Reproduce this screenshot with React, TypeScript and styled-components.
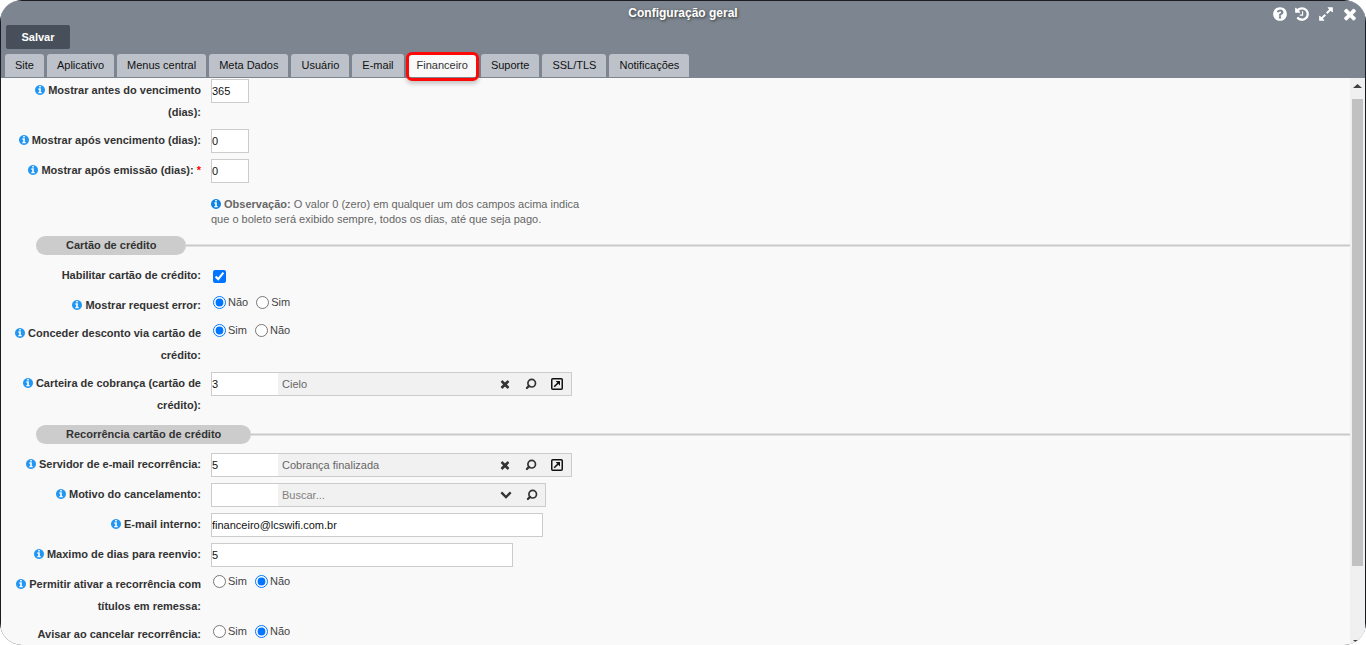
import React from "react";
import styled, { createGlobalStyle, css } from "styled-components";

const GlobalStyle = createGlobalStyle`
  *, *::before, *::after { box-sizing: border-box; }
  body {
    margin: 0;
    background: #fff;
    color: #333;
    font: 11px/22px "Liberation Sans", Arial, sans-serif;
  }
  button, input { font: inherit; color: inherit; }
`;

const Frame = styled.div`
  display: flex;
  height: 100vh;
  padding: 1px 1px 0;
  overflow: hidden;
  border-radius: 22px;
  background: #1b1c22;
`;

const Window = styled.main`
  display: flex;
  flex: 1;
  flex-direction: column;
  min-width: 0;
  background: #f9f9f9;
`;

const Header = styled.header`
  flex: none;
  background: #7d8690;
`;

const TitleBar = styled.div`
  display: grid;
  grid-template-columns: 1fr auto 1fr;
  align-items: center;
  height: 24px;
  padding: 0 8px;
`;

const Title = styled.h1`
  grid-column: 2;
  margin: 0;
  color: #fff;
  font-size: 12px;
  line-height: 24px;
  text-shadow: 1px 1px 3px #333;
`;

const Controls = styled.div<{ $gap: number }>`
  display: flex;
  align-items: center;
  justify-content: flex-end;
  gap: ${(p) => p.$gap}px;
`;

const IconButton = styled.button<{ $size: number; $width: number }>`
  display: flex;
  flex: none;
  align-items: center;
  justify-content: center;
  width: ${(p) => p.$width}px;
  padding: 0;
  border: 0;
  background: none;
  cursor: pointer;
  svg {
    flex: none;
    width: ${(p) => p.$size}px;
    height: ${(p) => p.$size}px;
  }
`;

const HeaderButton = styled(IconButton)`
  height: 16px;
  margin-top: 2px;
  color: #fff;
`;

const Actions = styled.div`
  padding: 0 5px;
`;

const SaveButton = styled.button`
  display: block;
  width: 64px;
  height: 24px;
  padding: 0;
  border: 0;
  border-radius: 2px;
  background: #464f5a;
  color: #fff;
  font-weight: bold;
  cursor: pointer;
`;

const Tabs = styled.nav`
  display: flex;
  gap: 3px;
  padding: 5px 4px 1px;
`;

const Tab = styled.a<{ $active: boolean }>`
  position: relative;
  height: 23px;
  padding: 0 10px;
  border-radius: 3px 3px 0 0;
  background: #bdc2ca;
  color: #111;
  line-height: 23px;
  text-decoration: none;
  white-space: nowrap;
  ${(p) =>
    p.$active &&
    css`
      background: #f9f9f9;
      color: #333;
      &::after {
        content: "";
        position: absolute;
        inset: -2px -1px -4px;
        border: 3px solid #ff0808;
        border-radius: 6px;
        box-shadow: 0 3px 4px rgba(0, 0, 0, 0.2);
      }
    `}
`;

const Body = styled.div`
  display: flex;
  flex: 1;
  min-height: 0;
`;

const Form = styled.form`
  flex: 1;
  min-width: 0;
  padding: 1px 0 0 10px;
  overflow-y: auto;
  scrollbar-width: none;
`;

const Row = styled.div`
  display: flex;
  gap: 10px;
  align-items: flex-start;
  margin-bottom: 6px;
`;

const labelStyle = css`
  flex: none;
  width: 190px;
  font-weight: bold;
  text-align: right;
`;

const Label = styled.label`
  ${labelStyle}
`;

const GroupLabel = styled.span`
  ${labelStyle}
`;

const InfoMark = styled.svg<{ $strong?: boolean }>`
  width: 10px;
  height: 10px;
  margin-right: 3px;
  fill: ${(p) => (p.$strong ? "#0d83e6" : "#2196f3")};
  vertical-align: -1px;
`;

const Required = styled.span`
  color: #f00;
`;

const TextInput = styled.input<{ $width: number }>`
  width: ${(p) => p.$width}px;
  height: 24px;
  padding: 0;
  border: 1px solid #ccc;
  background: #fff;
  color: #111;
`;

const CheckCell = styled.div`
  display: flex;
  align-items: center;
  height: 24px;
  padding-left: 2px;
`;

const Tick = styled.input`
  width: 13px;
  height: 13px;
  margin: 0;
  accent-color: #0075ff;
`;

const Options = styled.div`
  display: flex;
  gap: 8px;
  padding-left: 2px;
`;

const Option = styled.label`
  display: flex;
  gap: 2px;
  align-items: center;
  color: #444;
  line-height: 16px;
`;

const Note = styled.p`
  width: 380px;
  margin: 14px 0 9px 200px;
  color: #666;
  line-height: 15px;
`;

const Section = styled.h2`
  display: flex;
  align-items: center;
  margin: 9px 0 9px 25px;
  font-size: 11px;
  line-height: 19px;
  &::after {
    content: "";
    flex: 1;
    height: 3px;
    border: solid #e2e2e2;
    border-width: 1px 0;
    background: #c8c8c8;
  }
`;

const Pill = styled.span`
  padding: 0 30px;
  border-radius: 10px;
  background: #ccc;
`;

const LookupBox = styled.div<{ $width: number; $inset: number }>`
  display: flex;
  width: ${(p) => p.$width}px;
  height: 24px;
  padding-right: ${(p) => p.$inset}px;
  border: 1px solid #ccc;
  background: #f1f1f1;
`;

const CodeInput = styled.input`
  width: 66px;
  padding: 0;
  border: 0;
  background: #fff;
  color: #111;
`;

const NameInput = styled.input`
  flex: 1;
  min-width: 0;
  padding: 0 4px;
  border: 0;
  background: none;
  color: #666;
  &::placeholder { color: #808080; }
`;

const Scrollbar = styled.div`
  display: flex;
  flex: none;
  flex-direction: column;
  width: 15px;
  padding: 5px 2px 0;
  background: #f0f0f0;
`;

const Arrow = styled.svg`
  display: block;
  flex: none;
  width: 11px;
  height: 6px;
  fill: #404040;
`;

const Track = styled.div`
  flex: 1;
  margin: 10px 0 9px;
`;

const Thumb = styled.div`
  height: 88%;
  background: #c1c1c1;
`;

const InfoIcon = ({ strong }: { strong?: boolean }) => (
  <InfoMark viewBox="128 128 1536 1536" $strong={strong} aria-hidden="true">
    <path d="M1152 1376v-160q0-14-9-23t-23-9h-96v-512q0-14-9-23t-23-9h-320q-14 0-23 9t-9 23v160q0 14 9 23t23 9h96v320h-96q-14 0-23 9t-9 23v160q0 14 9 23t23 9h448q14 0 23-9t9-23zm-128-896v-160q0-14-9-23t-23-9h-192q-14 0-23 9t-9 23v160q0 14 9 23t23 9h192q14 0 23-9t9-23zm640 416q0 209-103 385.5t-279.5 279.5-385.5 103-385.5-103-279.5-279.5-103-385.5 103-385.5 279.5-279.5 385.5-103 385.5 103 279.5 279.5 103 385.5z" />
  </InfoMark>
);

const HelpIcon = () => (
  <svg viewBox="0 0 1792 1792" fill="currentColor">
    <path d="M1024 1376v-192q0-14-9-23t-23-9h-192q-14 0-23 9t-9 23v192q0 14 9 23t23 9h192q14 0 23-9t9-23zm256-672q0-88-55.5-163t-138.5-116-170-41q-243 0-371 213-15 24 8 42l132 100q7 6 19 6 16 0 25-12 53-68 86-92 34-24 86-24 48 0 85.5 26t37.5 59q0 38-20 61t-68 45q-63 28-115.5 86.5t-52.5 125.5v36q0 14 9 23t23 9h192q14 0 23-9t9-23q0-19 21.5-49.5t54.5-49.5q32-18 49-28.5t46-35 44.5-48 28-60.5 12.5-81zm384 192q0 209-103 385.5t-279.5 279.5-385.5 103-385.5-103-279.5-279.5-103-385.5 103-385.5 279.5-279.5 385.5-103 385.5 103 279.5 279.5 103 385.5z" />
  </svg>
);

const HistoryIcon = () => (
  <svg viewBox="0 0 1792 1792" fill="currentColor">
    <path d="M1664 896q0 156-61 298t-164 245-245 164-298 61q-172 0-327-72.5t-264-204.5q-7-10-6.5-22.5t8.5-20.5l137-138q10-9 25-9 16 2 23 12 73 95 179 147t225 52q104 0 198.5-40.5t163.5-109.5 109.5-163.5 40.5-198.5-40.5-198.5-109.5-163.5-163.5-109.5-198.5-40.5q-98 0-188 35.5t-160 101.5l137 138q31 30 14 69-17 40-59 40h-448q-26 0-45-19t-19-45v-448q0-42 40-59 39-17 69 14l130 129q107-101 244.5-156.5t284.5-55.5q156 0 298 61t245 164 164 245 61 298zm-640-288v448q0 14-9 23t-23 9h-320q-14 0-23-9t-9-23v-64q0-14 9-23t23-9h224v-352q0-14 9-23t23-9h64q14 0 23 9t9 23z" />
  </svg>
);

const ExpandIcon = () => (
  <svg viewBox="0 0 1792 1792" fill="currentColor">
    <path d="M883 1056q0 13-10 23l-332 332 144 144q19 19 19 45t-19 45-45 19h-448q-26 0-45-19t-19-45v-448q0-26 19-45t45-19 45 19l144 144 332-332q10-10 23-10t23 10l114 114q10 10 10 23zm781-864v448q0 26-19 45t-45 19-45-19l-144-144-332 332q-10 10-23 10t-23-10l-114-114q-10-10-10-23t10-23l332-332-144-144q-19-19-19-45t19-45 45-19h448q26 0 45 19t19 45z" />
  </svg>
);

const CrossIcon = () => (
  <svg viewBox="192 192 1408 1408" fill="currentColor">
    <path d="M1490 1322q0 40-28 68l-136 136q-28 28-68 28t-68-28l-294-294-294 294q-28 28-68 28t-68-28l-136-136q-28-28-28-68t28-68l294-294-294-294q-28-28-28-68t28-68l136-136q28-28 68-28t68 28l294 294 294-294q28-28 68-28t68 28l136 136q28 28 28 68t-28 68l-294 294 294 294q28 28 28 68z" />
  </svg>
);

const ChevronIcon = () => (
  <svg viewBox="0 128 1792 1792" fill="currentColor">
    <path d="M1683 808l-742 741q-19 19-45 19t-45-19l-742-741q-19-19-19-45.500t19-45.500l166-165q19-19 45-19t45 19l531 531 531-531q19-19 45-19t45 19l166 165q19 19 19 45.500t-19 45.500z" />
  </svg>
);

const SearchIcon = () => (
  <svg viewBox="0 0 12 12" fill="none" stroke="currentColor">
    <circle cx="6.700" cy="5.200" r="3.800" strokeWidth="1.700" />
    <path d="M4 7.900 1.900 10" strokeWidth="2.200" strokeLinecap="round" />
  </svg>
);

const OpenIcon = () => (
  <svg viewBox="0 0 12 12" fill="none" stroke="#111">
    <rect x="0.750" y="0.750" width="10.500" height="10.500" rx="1" strokeWidth="1.500" />
    <path d="M3.200 8.800 7.500 4.500" strokeWidth="1.600" />
    <path d="M4.600 3h4.400v4.400z" fill="#111" stroke="none" />
  </svg>
);

type FieldProps = { label: string; info?: boolean; required?: boolean };

const LabelText = ({ label, info = true, required }: FieldProps) => (
  <>
    {info && <InfoIcon />}
    {label}
    {required && <Required> *</Required>}
  </>
);

const TextField = ({ id, value, width, ...rest }: FieldProps & { id: string; value: string; width: number }) => (
  <Row>
    <Label htmlFor={id}><LabelText {...rest} /></Label>
    <TextInput id={id} defaultValue={value} $width={width} />
  </Row>
);

const RadioField = ({ name, options, value, ...rest }: FieldProps & { name: string; options: string[]; value: string }) => (
  <Row role="radiogroup" aria-labelledby={`${name}-label`}>
    <GroupLabel id={`${name}-label`}><LabelText {...rest} /></GroupLabel>
    <Options>
      {options.map((option) => (
        <Option key={option}>
          <Tick type="radio" name={name} defaultChecked={option === value} />
          {option}
        </Option>
      ))}
    </Options>
  </Row>
);

const LookupField = ({ id, code, text, filled, ...rest }: FieldProps & { id: string; code: string; text: string; filled: boolean }) => (
  <Row>
    <Label htmlFor={id}><LabelText {...rest} /></Label>
    <LookupBox $width={filled ? 361 : 335} $inset={filled ? 1 : 0}>
      <CodeInput id={id} defaultValue={code} />
      <NameInput aria-label="Descrição" defaultValue={text} placeholder="Buscar..." />
      {filled ? (
        <IconButton type="button" aria-label="Limpar" $size={10} $width={26}><CrossIcon /></IconButton>
      ) : (
        <IconButton type="button" aria-label="Abrir lista" $size={12} $width={26}><ChevronIcon /></IconButton>
      )}
      <IconButton type="button" aria-label="Pesquisar" $size={12} $width={26}><SearchIcon /></IconButton>
      {filled && <IconButton type="button" aria-label="Abrir registro" $size={12} $width={26}><OpenIcon /></IconButton>}
    </LookupBox>
  </Row>
);

const tabs = ["Site", "Aplicativo", "Menus central", "Meta Dados", "Usuário", "E-mail", "Financeiro", "Suporte", "SSL/TLS", "Notificações"];

export default function App() {
  return (
    <Frame>
      <GlobalStyle />
      <Window>
        <Header>
          <TitleBar>
            <Title>Configuração geral</Title>
            <Controls $gap={10}>
              <Controls $gap={8}>
                <HeaderButton type="button" aria-label="Ajuda" $size={16} $width={14}><HelpIcon /></HeaderButton>
                <HeaderButton type="button" aria-label="Histórico" $size={16} $width={14}><HistoryIcon /></HeaderButton>
              </Controls>
              <HeaderButton type="button" aria-label="Expandir" $size={16} $width={14}><ExpandIcon /></HeaderButton>
              <HeaderButton type="button" aria-label="Fechar" $size={14} $width={14}><CrossIcon /></HeaderButton>
            </Controls>
          </TitleBar>
          <Actions>
            <SaveButton type="submit" form="config">Salvar</SaveButton>
          </Actions>
          <Tabs>
            {tabs.map((tab) => (
              <Tab key={tab} href="#" $active={tab === "Financeiro"}>{tab}</Tab>
            ))}
          </Tabs>
        </Header>
        <Body>
          <Form id="config">
            <TextField id="antes" label="Mostrar antes do vencimento (dias):" value="365" width={38} />
            <TextField id="apos" label="Mostrar após vencimento (dias):" value="0" width={38} />
            <TextField id="emissao" label="Mostrar após emissão (dias):" required value="0" width={38} />
            <Note>
              <InfoIcon strong />
              <b>Observação:</b> O valor 0 (zero) em qualquer um dos campos acima indica que o boleto será exibido
              sempre, todos os dias, até que seja pago.
            </Note>
            <Section><Pill>Cartão de crédito</Pill></Section>
            <Row>
              <Label htmlFor="habilitar">Habilitar cartão de crédito:</Label>
              <CheckCell><Tick id="habilitar" type="checkbox" defaultChecked /></CheckCell>
            </Row>
            <RadioField name="erro" label="Mostrar request error:" options={["Não", "Sim"]} value="Não" />
            <RadioField name="desconto" label="Conceder desconto via cartão de crédito:" options={["Sim", "Não"]} value="Sim" />
            <LookupField id="carteira" label="Carteira de cobrança (cartão de crédito):" code="3" text="Cielo" filled />
            <Section><Pill>Recorrência cartão de crédito</Pill></Section>
            <LookupField id="servidor" label="Servidor de e-mail recorrência:" code="5" text="Cobrança finalizada" filled />
            <LookupField id="motivo" label="Motivo do cancelamento:" code="" text="" filled={false} />
            <TextField id="email" label="E-mail interno:" value="financeiro@lcswifi.com.br" width={332} />
            <TextField id="reenvio" label="Maximo de dias para reenvio:" value="5" width={302} />
            <RadioField name="remessa" label="Permitir ativar a recorrência com títulos em remessa:" options={["Sim", "Não"]} value="Não" />
            <RadioField name="avisar" info={false} label="Avisar ao cancelar recorrência:" options={["Sim", "Não"]} value="Não" />
          </Form>
          <Scrollbar aria-hidden="true">
            <Arrow viewBox="0 0 11 6"><path d="M1 5h9L5.500 1z" /></Arrow>
            <Track><Thumb /></Track>
            <Arrow viewBox="0 0 11 6"><path d="M1 1h9L5.500 5z" /></Arrow>
          </Scrollbar>
        </Body>
      </Window>
    </Frame>
  );
}
